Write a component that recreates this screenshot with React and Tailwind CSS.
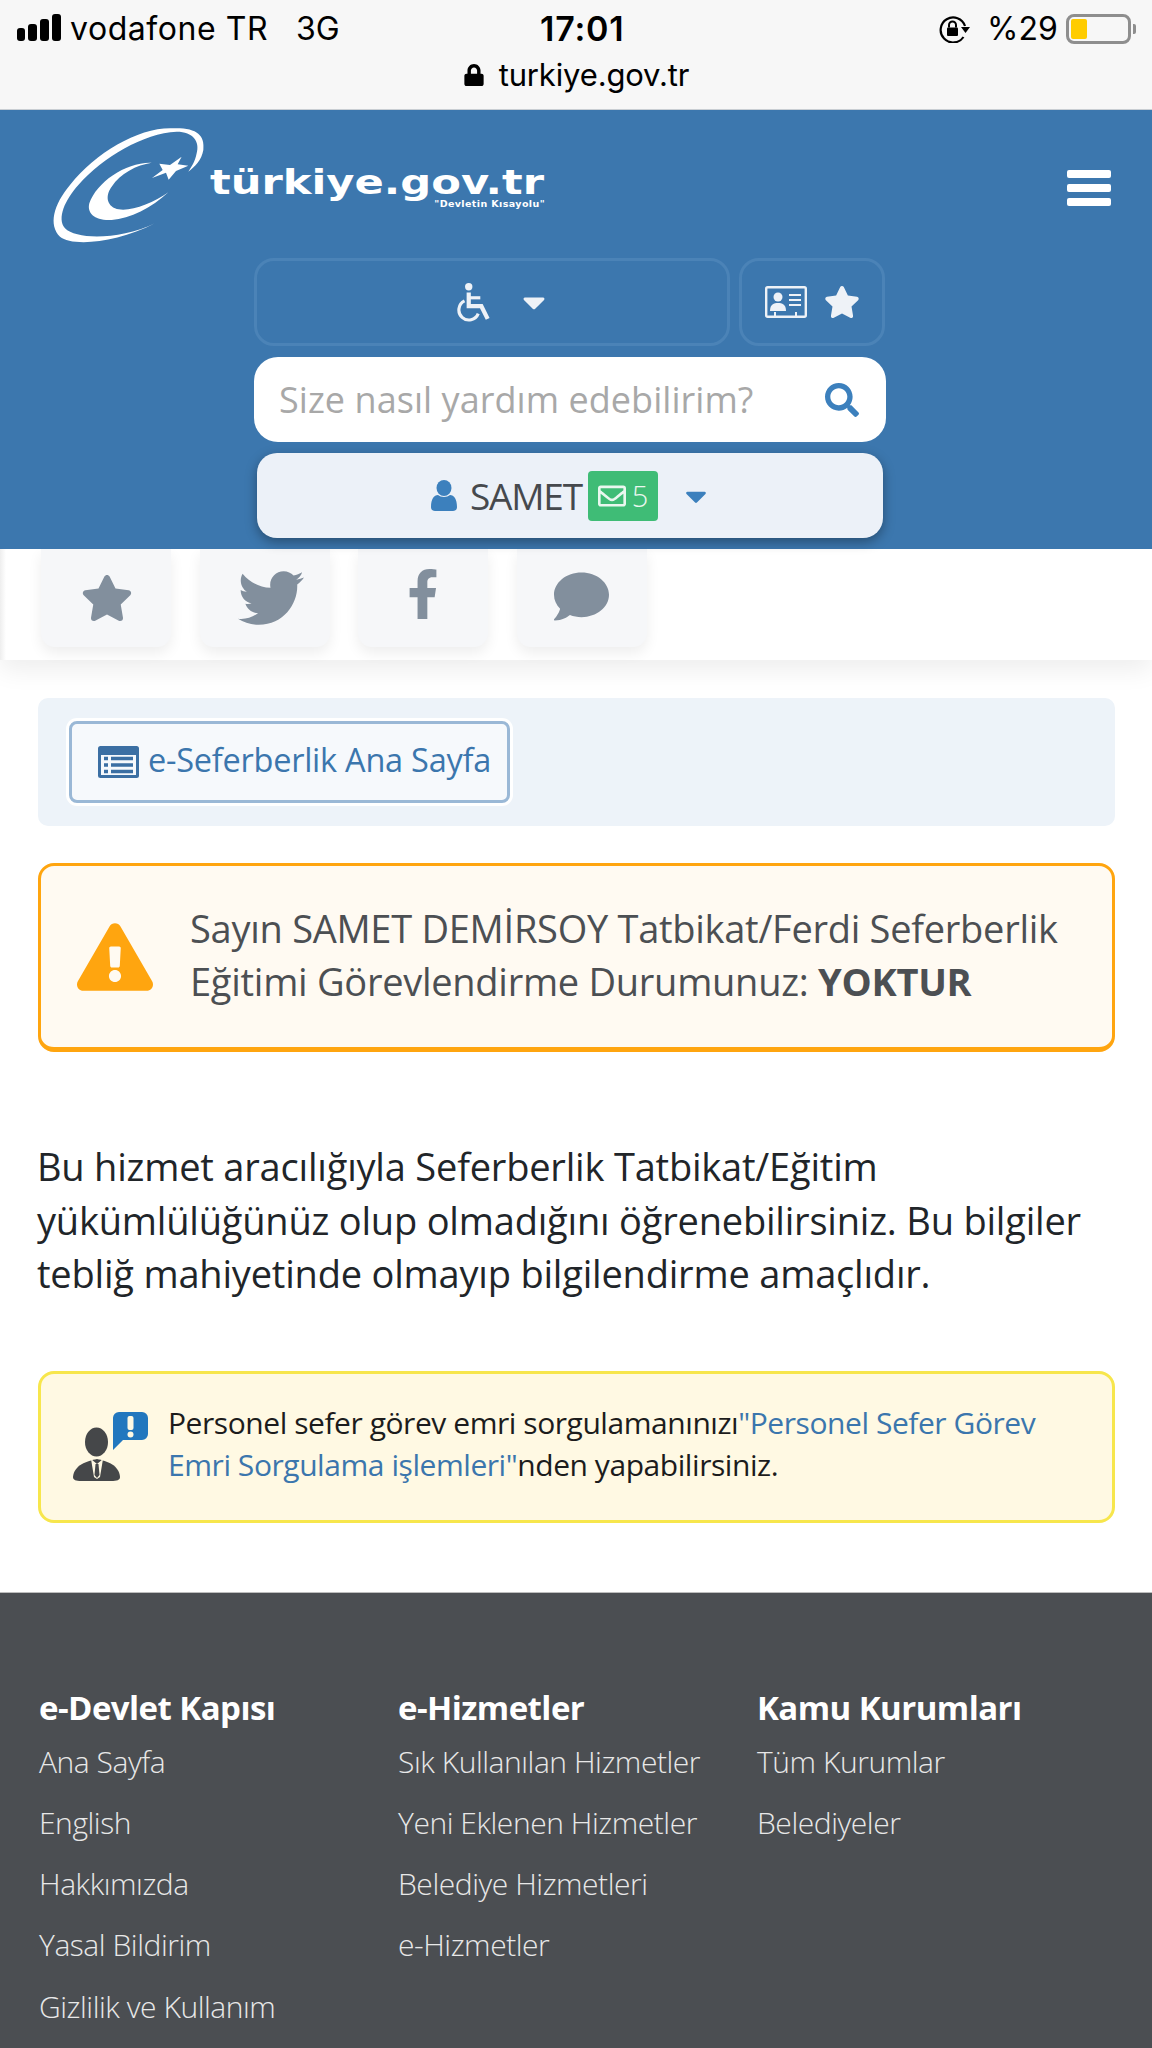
import React from "react";
import { FaStar, FaTwitter, FaFacebookF, FaComment, FaRegEnvelope, FaSearch, FaLock, FaCaretDown, FaExclamationTriangle } from "react-icons/fa";

function Logo() {
  return (
    <svg width="200" height="140" viewBox="0 0 600 420" className="shrink-0" fill="white">
      <path d="M400 40 C470 38 495 60 490 105 C485 135 465 155 445 170 C455 155 465 140 470 115 C480 80 460 50 410 50 C310 55 190 125 115 210 C75 255 50 310 75 340 C110 375 240 375 345 325 C230 385 95 395 60 365 C25 330 40 270 90 210 C170 110 300 35 400 40 Z" />
      <path d="M335 143 C260 140 170 200 148 265 C140 295 165 318 215 315 C270 312 335 278 385 232 C335 268 260 295 225 280 C195 265 200 235 215 215 C240 175 290 150 335 143 Z" />
      <path d="M425 125 L413 148 L445 152 L408 168 L386 194 L378 173 L336 189 L368 165 L358 146 L390 150 Z" />
    </svg>
  );
}

function Wheelchair() {
  return (
    <svg width="40" height="40" viewBox="0 0 38 38" fill="none" stroke="#eef2f7" strokeWidth="3">
      <circle cx="14" cy="4.5" r="3.5" fill="#eef2f7" stroke="none" />
      <path d="M14 10 V23 H26 L32 35" strokeWidth="4" />
      <path d="M14 15 H25" strokeWidth="3" />
      <path d="M10 18 A 9.5 9.5 0 1 0 23 30" />
    </svg>
  );
}

function IdCard() {
  return (
    <svg width="42" height="32" viewBox="0 0 42 32" fill="none">
      <rect x="1.2" y="1.2" width="39.6" height="29.6" rx="1.5" stroke="#eef2f7" strokeWidth="2.4" />
      <circle cx="13" cy="11" r="4.5" fill="#eef2f7" />
      <path d="M5 25 C5 18 9 17 13 17 C17 17 21 18 21 25 Z" fill="#eef2f7" />
      <path d="M24 9 H36 M24 14 H36 M24 19 H36" stroke="#eef2f7" strokeWidth="2.2" />
      <path d="M10 26 V30 M31 26 V30" stroke="#eef2f7" strokeWidth="2" />
    </svg>
  );
}

function RotationLock() {
  return (
    <svg width="32" height="28" viewBox="0 0 32 28" fill="none" className="shrink-0">
      <path d="M26 11 A 12.5 12.5 0 1 0 24.5 22" stroke="#000" strokeWidth="2.2" />
      <path d="M22 12 L31 12 L26.5 18 Z" fill="#000" />
      <rect x="8" y="12.5" width="11" height="8.5" rx="1" fill="#000" />
      <path d="M10 12.5 V10 a3.5 3.5 0 0 1 7 0 V12.5" stroke="#000" strokeWidth="2" />
    </svg>
  );
}

function Agent() {
  return (
    <svg width="78" height="72" viewBox="0 0 78 72">
      <path d="M40 7 a6 6 0 0 1 6 -6 H69 a6 6 0 0 1 6 6 V23 a6 6 0 0 1 -6 6 H50 L40 39 Z" fill="#2277be" />
      <rect x="54.5" y="5" width="6" height="14" rx="2" fill="#fff9e3" />
      <circle cx="57.5" cy="23.5" r="3" fill="#fff9e3" />
      <ellipse cx="23.5" cy="31" rx="11.5" ry="14.5" fill="#454749" />
      <path d="M0 66 C1 54 14 50 24 48 C34 50 46 54 47 66 C47 69 44 70 38 70 H8 C3 70 0 69 0 66 Z" fill="#454749" />
      <path d="M18 48 L24 53 L30 48 L27 66 L24 68 L21 66 Z" fill="#fff9e3" />
      <path d="M22.5 53 H25.5 L26.5 64 L24 67 L21.5 64 Z" fill="#454749" />
    </svg>
  );
}

function Person() {
  return (
    <svg width="26" height="31" viewBox="0 0 26 31" fill="#3c80bd" className="shrink-0">
      <ellipse cx="13" cy="8" rx="7.5" ry="8" />
      <path d="M0 27 C0 19 3 15 7 15 C10 17.5 16 17.5 19 15 C23 15 26 19 26 27 C26 30 24 31 22 31 H4 C2 31 0 30 0 27 Z" />
    </svg>
  );
}

function ListIcon() {
  return (
    <svg width="41" height="32" viewBox="0 0 41 32" className="shrink-0">
      <rect width="41" height="32" rx="2.5" fill="#3b6fa3" />
      <rect x="3" y="9" width="35" height="20" fill="#f6f9fc" />
      <path d="M6 12.5 H10 M6 19 H10 M6 25.5 H10 M13 12.5 H35 M13 19 H35 M13 25.5 H35" stroke="#3b6fa3" strokeWidth="3.4" />
    </svg>
  );
}

const col1 = ["Ana Sayfa", "English", "Hakkımızda", "Yasal Bildirim", "Gizlilik ve Kullanım"];
const col2 = ["Sık Kullanılan Hizmetler", "Yeni Eklenen Hizmetler", "Belediye Hizmetleri", "e-Hizmetler"];
const col3 = ["Tüm Kurumlar", "Belediyeler"];

function FooterCol({ title, items }) {
  return (
    <div>
      <div className="text-[33px] leading-[40px] font-bold text-white tracking-[-0.55px]">{title}</div>
      <ul className="mt-[3px]">
        {items.map((t) => (
          <li key={t} className="text-[30px] leading-[61.3px] font-light text-[#e8e8e8] tracking-[-0.45px] whitespace-nowrap">{t}</li>
        ))}
      </ul>
    </div>
  );
}

function Social({ children }) {
  return (
    <div className="w-[130px] h-[98px] bg-[#f6f7f9] rounded-b-[14px] shadow-[0_6px_14px_rgba(0,0,0,0.07)] flex items-center justify-center text-[#828f9d]">
      {children}
    </div>
  );
}

export default function App() {
  return (
    <div className="w-[1152px] h-[2048px] overflow-hidden bg-white [font-family:'Open_Sans',sans-serif]">
      <div className="h-[110px] bg-[#f7f7f7] border-b border-[#c9ced3] text-black [font-family:Inter,sans-serif]">
        <div className="flex items-center h-[58px] text-[32px] leading-[40px]">
          <div className="flex items-end gap-[3px] ml-[17px] w-[45px] h-[27px] -mt-[3px]">
            <span className="w-[8px] h-[13px] bg-black rounded-[3px]" />
            <span className="w-[9px] h-[17px] bg-black rounded-[3px]" />
            <span className="w-[9px] h-[22px] bg-black rounded-[3px]" />
            <span className="w-[9px] h-[27px] bg-black rounded-[3px]" />
          </div>
          <span className="ml-[8px] w-[226px] tracking-[0.55px] whitespace-nowrap">vodafone TR</span>
          <span className="w-[244px]">3G</span>
          <span className="font-semibold w-[399px] text-[34px] tracking-[0.8px]">17:01</span>
          <RotationLock />
          <span className="ml-[16px]">%29</span>
          <div className="relative ml-[8px] w-[65px] h-[30px] border-[3px] border-[#8e8e8e] rounded-[8px] p-[2px] -mt-[1px]">
            <div className="w-[16px] h-full bg-[#ffcc00] rounded-[2px]" />
            <span className="absolute -right-[8px] top-[7px] w-[3px] h-[10px] bg-[#8e8e8e] rounded-r-[2px]" />
          </div>
        </div>
        <div className="flex items-center justify-center gap-[14px] text-[31px] leading-[36px] -mt-[1px] tracking-[-0.15px]">
          <FaLock size={22} />
          <span>turkiye.gov.tr</span>
        </div>
      </div>

      <header className="relative z-10 h-[439px] bg-[#3c77ae] pt-[5px]">
        <div className="flex items-start h-[130px] pl-[40px] pr-[41px]">
          <Logo />
          <div className="w-[335px] -ml-[30px] mt-[48px] flex flex-col items-end text-white [font-family:'DejaVu_Sans',sans-serif] font-bold">
            <span className="block w-full whitespace-nowrap text-[33px] leading-[40px] origin-left scale-x-[1.31]">türkiye.gov.tr</span>
            <span className="text-[9.5px] leading-[10px] -mt-[4px] tracking-[0.4px] whitespace-nowrap">"Devletin Kısayolu"</span>
          </div>
          <div className="ml-auto mt-[55px] flex flex-col gap-[6px]">
            <span className="w-[44px] h-[8px] bg-white rounded-[2px]" />
            <span className="w-[44px] h-[8px] bg-white rounded-[2px]" />
            <span className="w-[44px] h-[8px] bg-white rounded-[2px]" />
          </div>
        </div>
        <div className="ml-[254px] w-[632px] mt-[13px] flex flex-col gap-[11px]">
          <div className="flex gap-[9px] h-[88px]">
            <div className="w-[476px] border-[3px] border-[#4b83b7] rounded-[20px] flex items-center pl-[197px] text-[#eef2f7]">
              <Wheelchair />
              <FaCaretDown size={36} className="ml-[22px]" />
            </div>
            <div className="w-[146px] border-[3px] border-[#4b83b7] rounded-[20px] flex items-center justify-center gap-[17px] text-[#eef2f7]">
              <IdCard />
              <FaStar size={36} />
            </div>
          </div>
          <div className="h-[85px] bg-white rounded-[24px] flex items-center pl-[25px] pr-[27px] justify-between">
            <span className="text-[36px] text-[#a8a8a8] tracking-[0.05px]">Size nasıl yardım edebilirim?</span>
            <FaSearch size={34} className="text-[#3c80bd]" />
          </div>
          <div className="h-[85px] mx-[3px] bg-[#ecf1f8] rounded-[20px] shadow-[0_4px_12px_rgba(0,0,0,0.35)] flex items-center pl-[174px]">
            <Person />
            <span className="ml-[13px] text-[37px] text-[#46494d] tracking-[-1.2px]">SAMET</span>
            <span className="ml-[6px] w-[70px] h-[50px] bg-[#3fbc76] rounded-[4px] flex items-center justify-center gap-[6px] text-[#eaf7ef] text-[29px] font-light">
              <FaRegEnvelope size={28} />
              <span>5</span>
            </span>
            <FaCaretDown size={34} className="ml-[21px] text-[#3c80bd]" />
          </div>
        </div>
      </header>

      <div className="h-[111px] bg-[linear-gradient(90deg,#eeeeee,#ffffff_6px)] shadow-[0_10px_24px_rgba(0,0,0,0.07)] pl-[41px] flex gap-[28.5px]">
        <Social><FaStar size={52} className="ml-[1px]" /></Social>
        <Social><FaTwitter size={66} className="ml-[12px]" /></Social>
        <Social><FaFacebookF size={50} className="-mt-[8px]" /></Social>
        <Social><FaComment size={55} className="-mt-[4px]" /></Social>
      </div>

      <main className="px-[37px] ml-[1px]">
        <div className="mt-[38px] h-[128px] bg-[#edf3f9] rounded-[10px] pl-[31px] pt-[23px]">
          <div className="w-[441px] h-[82px] bg-[#f6f9fc] border-[3px] border-[#9ab8d6] rounded-[8px] ring-[3px] ring-white flex items-center pl-[26px]">
            <ListIcon />
            <span className="ml-[9px] -mt-[3px] text-[32.5px] text-[#3b76ad] tracking-[-0.25px] whitespace-nowrap">e-Seferberlik Ana Sayfa</span>
          </div>
        </div>

        <div className="mt-[37px] h-[189px] bg-[#fffaf2] border-[3px] border-b-[5px] border-[#ffa50f] rounded-[16px] flex items-center">
          <FaExclamationTriangle size={76} className="ml-[36px] text-[#ffa50f] shrink-0" />
          <p className="ml-[37px] -mt-[4px] text-[38px] leading-[53px] text-[#4c4f53] tracking-[-0.27px]">
            Sayın SAMET DEMİRSOY Tatbikat/Ferdi Seferberlik Eğitimi Görevlendirme Durumunuz: <b>YOKTUR</b>
          </p>
        </div>

        <p className="mt-[88px] -ml-[1px] text-[38px] leading-[53.5px] text-[#212529] tracking-[-0.2px] w-[1060px]">
          Bu hizmet aracılığıyla Seferberlik Tatbikat/Eğitim yükümlülüğünüz olup olmadığını öğrenebilirsiniz. Bu bilgiler tebliğ mahiyetinde olmayıp bilgilendirme amaçlıdır.
        </p>

        <div className="mt-[70px] h-[152px] bg-[#fff9e3] border-[3px] border-[#f7e64c] rounded-[16px] flex items-center">
          <div className="ml-[32px] shrink-0"><Agent /></div>
          <p className="ml-[17px] pr-[60px] text-[30px] leading-[42px] text-[#1c1c1c] tracking-[-0.44px] -mt-[5px]">
            Personel sefer görev emri sorgulamanınızı<span className="text-[#3b76ad]">"Personel Sefer Görev Emri Sorgulama işlemleri"</span>nden yapabilirsiniz.
          </p>
        </div>
      </main>

      <footer className="mt-[69px] h-[456px] bg-[#4b4e52] border-t border-[#bdbdbd] pt-[95px] pl-[39px] grid grid-cols-[359px_359px_1fr]">
        <FooterCol title="e-Devlet Kapısı" items={col1} />
        <FooterCol title="e-Hizmetler" items={col2} />
        <FooterCol title="Kamu Kurumları" items={col3} />
      </footer>
    </div>
  );
}
